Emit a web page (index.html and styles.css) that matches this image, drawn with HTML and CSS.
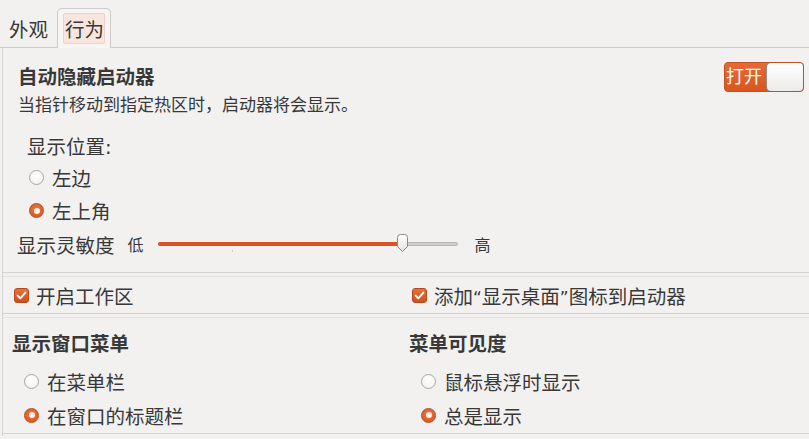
FILE: index.html
```html
<!DOCTYPE html>
<html lang="zh-CN">
<head>
<meta charset="utf-8">
<link rel="stylesheet" href="styles.css">
</head>
<body>
<div class="tabbar">
  <div class="tab">外观</div>
  <div class="tab tab-active"><span class="tab-label">行为</span></div>
</div>
<div class="page">
  <section class="sec sec-launcher">
    <div class="head-row">
      <div class="title">自动隐藏启动器</div>
      <div class="switch"><span class="switch-on">打开</span><span class="switch-knob"></span></div>
    </div>
    <div class="subtitle">当指针移动到指定热区时，启动器将会显示。</div>
    <div class="pos-label">显示位置:</div>
    <div class="radio-row r1"><span class="radio"></span><span>左边</span></div>
    <div class="radio-row r1"><span class="radio on"></span><span>左上角</span></div>
    <div class="sens-row">
      <span class="sens-label">显示灵敏度</span>
      <span class="small">低</span>
      <div class="slider">
        <div class="slider-fill"></div>
        <svg class="thumb" width="13" height="20" viewBox="0 0 13 20"><defs><linearGradient id="tg" x1="0" y1="0" x2="0" y2="1"><stop offset="0" stop-color="#ffffff"/><stop offset="1" stop-color="#e4e3e1"/></linearGradient></defs><path d="M1.5 4.5 Q1.5 1.5 4.5 1.5 L8.5 1.5 Q11.5 1.5 11.5 4.5 L11.5 13.5 L6.5 18.5 L1.5 13.5 Z" fill="url(#tg)" stroke="#8c8a88" stroke-width="1"/></svg>
        <span class="tick"></span>
      </div>
      <span class="small high">高</span>
    </div>
  </section>
  <section class="sec sec-check">
    <div class="check-row"><span class="check"><svg width="15" height="15" viewBox="0 0 15 15"><path d="M3.6 7.6 L6.3 10.3 L11.4 4.6" fill="none" stroke="#ffffff" stroke-width="1.9" stroke-linecap="round" stroke-linejoin="round"/></svg></span><span>开启工作区</span></div>
    <div class="check-row"><span class="check"><svg width="15" height="15" viewBox="0 0 15 15"><path d="M3.6 7.6 L6.3 10.3 L11.4 4.6" fill="none" stroke="#ffffff" stroke-width="1.9" stroke-linecap="round" stroke-linejoin="round"/></svg></span><span>添加<span class="q">“</span>显示桌面<span class="q">”</span>图标到启动器</span></div>
  </section>
  <section class="sec sec-menu">
    <div class="col">
      <div class="heading">显示窗口菜单</div>
      <div class="radio-row r2"><span class="radio"></span><span>在菜单栏</span></div>
      <div class="radio-row r2"><span class="radio on"></span><span>在窗口的标题栏</span></div>
    </div>
    <div class="col">
      <div class="heading">菜单可见度</div>
      <div class="radio-row r2"><span class="radio"></span><span>鼠标悬浮时显示</span></div>
      <div class="radio-row r2"><span class="radio on"></span><span>总是显示</span></div>
    </div>
  </section>
</div>
</body>
</html>
```
FILE: styles.css
```css
* { box-sizing: border-box; }
html, body { margin: 0; padding: 0; }
body {
  width: 809px;
  height: 439px;
  overflow: hidden;
  background: #f2f1f0;
  color: #383838;
  font-family: "DejaVu Sans", "Noto Sans CJK SC", sans-serif;
  font-size: 19.5px;
}
.tabbar {
  height: 48px;
  display: flex;
  align-items: flex-end;
  padding-left: 9px;
  border-bottom: 1px solid #cdcbc9;
}
.tab {
  font-family: "Noto Sans CJK SC", sans-serif;
  font-size: 19.5px;
  line-height: 26px;
  padding-bottom: 5px;
  margin-right: 9px;
}
.tab-active {
  height: 40px;
  width: 54px;
  border: 1px solid #cdcbc9;
  border-bottom: none;
  border-radius: 5px 5px 0 0;
  background: #f6f5f4;
  padding: 4px 5px 4px 5px;
  margin-bottom: -1px;
}
.tab-label {
  display: block;
  height: 31px;
  line-height: 29px;
  background: #f8e6de;
  border: 1px solid #f2cfc1;
  border-radius: 2px;
  padding-left: 1px;
}
.page {
  margin-left: 2px;
  border-left: 1px solid #d6d4d2;
  height: 388px;
}
.sec { border-bottom: 1px solid #d3d2d0; }
.sec + .sec { border-top: 1px solid #e2e1df; margin-top: 3px; }
.sec-launcher { height: 225px; padding: 14px 5px 0 15px; }
.head-row {
  display: flex;
  justify-content: space-between;
  align-items: center;
  height: 30px;
}
.title { font-weight: 700; font-size: 19.5px; line-height: 28px; margin-top: 1px; }
.switch {
  width: 80px;
  height: 30px;
  display: flex;
  border-radius: 4px;
  background: #e0602b;
  border: 1px solid #c4511f;
  overflow: hidden;
}
.switch-on {
  width: 42px;
  color: #ffffff;
  font-size: 18px;
  line-height: 28px;
  padding-left: 1px;
  background: linear-gradient(#e46a36, #d9561f);
}
.switch-knob {
  flex: 1;
  background: linear-gradient(#ffffff, #ecebea);
  border: 1px solid #8e8b88;
  border-radius: 5px;
  margin: -1px;
}
.subtitle { font-size: 17px; line-height: 22px; margin-top: 2px; }
.pos-label { line-height: 26px; margin-top: 19px; padding-left: 9px; }
.radio-row { display: flex; align-items: center; }
.r1 { height: 33px; padding-left: 11px; }
.radio {
  width: 15px;
  height: 15px;
  border-radius: 50%;
  border: 1px solid #a8a6a4;
  background: radial-gradient(circle at 50% 35%, #ffffff, #efeeed);
  margin-right: 8px;
  flex: none;
  display: flex;
  align-items: center;
  justify-content: center;
}
.radio.on {
  border-color: #b94a1c;
  background: radial-gradient(circle at 50% 40%, #ec7a47, #d2511d);
}
.radio.on::after {
  content: "";
  width: 6px;
  height: 6px;
  border-radius: 50%;
  background: #fdf0e6;
}
.sens-row { display: flex; align-items: center; height: 34px; margin-left: -1px; }
.sens-label { margin-right: 13px; }
.small { font-size: 16px; }
.slider {
  position: relative;
  width: 300px;
  height: 4px;
  margin-left: 14px;
  background: #cfcecc;
  border: 1px solid #b9b8b6;
  border-radius: 2px;
}
.slider-fill {
  width: 242px;
  height: 4px;
  margin: -1px;
  background: #d9541f;
  border-radius: 2px;
}
.thumb { position: absolute; left: 237px; top: -10px; }
.tick { position: absolute; left: 73px; top: 7px; width: 1px; height: 2px; background: #c8c7c5; }
.high { margin-left: 17px; }
.sec-check {
  height: 38px;
  display: grid;
  grid-template-columns: 398px 1fr;
  padding-left: 11px;
  align-items: center;
}
.check-row { display: flex; align-items: center; }
.check {
  width: 15px;
  height: 15px;
  border-radius: 3px;
  background: linear-gradient(#e5723f, #cf4f1c);
  border: 1px solid #b6481b;
  margin-right: 7px;
  display: flex;
  align-items: center;
  justify-content: center;
  flex: none;
}
.check svg { margin: -1px; }
.q { font-family: "DejaVu Sans", sans-serif; font-size: 17px; }
.sec-menu {
  height: 117px;
  display: grid;
  grid-template-columns: 397px 1fr;
  padding-left: 9px;
  padding-top: 14px;
}
.heading { font-weight: 700; line-height: 26px; }
.r2 { height: 34px; padding-left: 12px; }
.heading + .r2 { margin-top: 6px; }
```
